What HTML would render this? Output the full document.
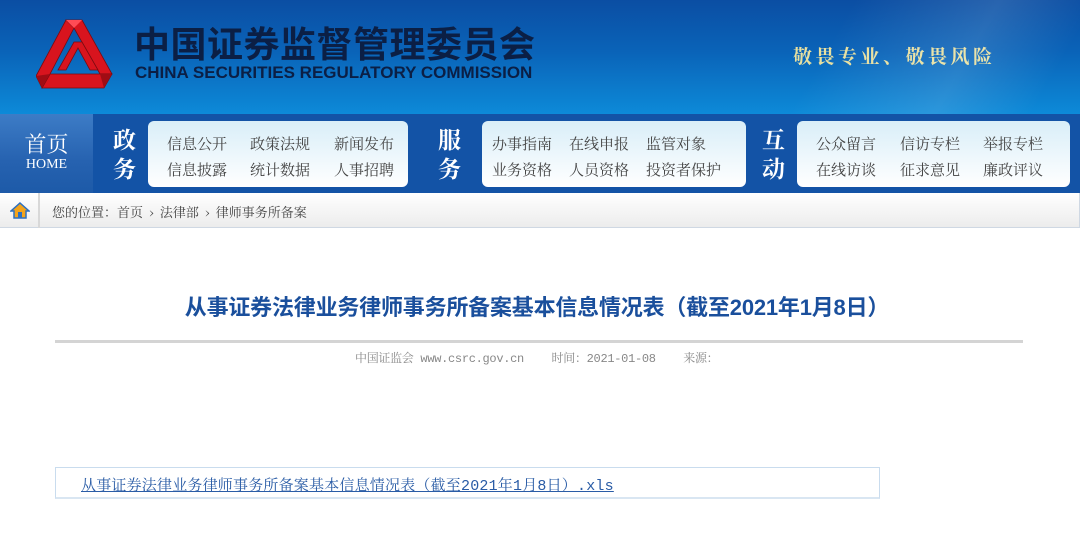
<!DOCTYPE html>
<html><head><meta charset="utf-8">
<style>
*{margin:0;padding:0;box-sizing:border-box}
body{width:1080px;height:539px;overflow:hidden;background:#fff;font-family:"Liberation Serif","Noto Serif CJK SC",serif;position:relative}
.hdr{position:absolute;left:0;top:0;width:1080px;height:114px;background:linear-gradient(180deg,#0b4ea3 0%,#0a63b8 45%,#0d8ad8 100%)}
.hdr:after{content:"";position:absolute;right:0;top:0;width:420px;height:114px;background:linear-gradient(120deg,rgba(255,255,255,0) 40%,rgba(255,255,255,.12) 70%,rgba(255,255,255,0) 90%)}
.t1{position:absolute;left:134px;top:22px;font:bold 36px/40px "Noto Sans CJK SC",sans-serif;color:#0b1f45;letter-spacing:0.5px;white-space:nowrap}
.t2{position:absolute;left:135px;top:64px;font:bold 17px/18px "Liberation Sans",sans-serif;color:#0b1f45;white-space:nowrap;transform:scaleX(1.0);transform-origin:left}
.slog{position:absolute;left:793px;top:42px;font:bold 19px "Noto Serif CJK SC",serif;color:#e8e0a0;letter-spacing:3.5px;white-space:nowrap}
.nav{position:absolute;left:0;top:114px;width:1080px;height:79px;background:#1353a6}
.home{position:absolute;left:0;top:0;width:93px;height:79px;background:linear-gradient(180deg,#3d7cc6,#2662b0 60%,#1d5aa8);color:#fff;text-align:center}
.home b{display:block;font:22px/26px "Noto Serif CJK SC",serif;margin-top:17px}
.home span{display:block;font:14px "Liberation Serif",serif;margin-top:0}
.vt{position:absolute;top:10px;color:#fff;font:bold 23px/29px "Noto Serif CJK SC",serif;width:26px}
.box{position:absolute;top:7px;height:66px;border-radius:6px;background:linear-gradient(180deg,#d9eef8,#fff);}
.box a{position:absolute;font:15px "Noto Serif CJK SC",serif;color:#444;white-space:nowrap;text-decoration:none}
.bc{position:absolute;left:0;top:193px;width:1080px;height:35px;background:linear-gradient(180deg,#fff,#ececec);border-bottom:1px solid #cfd8e3;border-right:1px solid #cfd8e3}
.bc .sep{position:absolute;left:38px;top:0;width:2px;height:35px;background:#d8d8d8}
.bc .tx{position:absolute;left:52px;top:9px;font:13px "Noto Serif CJK SC",serif;color:#444;white-space:nowrap;word-spacing:3px}
.title{position:absolute;left:0;width:1080px;top:290px;text-align:center;font:bold 22px "Liberation Sans","Noto Sans CJK SC",sans-serif;color:#1a4f9c;padding-right:6px;letter-spacing:-0.2px}
.line{position:absolute;left:55px;top:340px;width:968px;height:3px;background:#d4d4d4}
.meta{position:absolute;left:355px;top:349px;font:12px "Liberation Mono","Noto Serif CJK SC",monospace;color:#888;white-space:pre;letter-spacing:-0.3px}
.meta i{font-style:normal;font-family:"Noto Serif CJK SC",serif}
.att{position:absolute;left:55px;top:467px;width:825px;height:32px;border:1px solid #c9dcee;border-bottom:2px solid #d9e6f2}
.att a{position:absolute;left:25px;top:6px;font:15px "Liberation Mono","Noto Serif CJK SC",monospace;color:#2a5ca6;text-decoration:underline;white-space:nowrap;letter-spacing:0.2px}
</style></head><body>
<div class="hdr">
<svg style="position:absolute;left:36px;top:16px" width="80" height="74" viewBox="0 0 80 74">
<g fill="#d8141e" stroke="#7a0a10" stroke-width="0.8">
<polygon points="30,4 46,4 76,58 64,58 38,12"/>
<polygon points="76,58 68,72 6,72 14,58"/>
<polygon points="6,72 0,60 30,4 38,12 14,58"/>
<polygon points="38,26 46,26 62,54 54,54 42,32 30,54 22,54"/>
</g>
<polygon points="38,12 30,4 46,4" fill="#ff4b55"/>
<polygon points="14,58 6,72 0,60" fill="#a00c14"/>
<polygon points="64,58 76,58 68,72" fill="#a00c14"/>
</svg>
<div class="t1">中国证券监督管理委员会</div>
<div class="t2">CHINA SECURITIES REGULATORY COMMISSION</div>
<div class="slog">敬畏专业、敬畏风险</div>
</div>
<div class="nav">
<div class="home"><b>首页</b><span>HOME</span></div>
<div class="vt" style="left:113px">政<br>务</div>
<div class="box" style="left:148px;width:260px">
<a style="left:19px;top:12px">信息公开</a><a style="left:102px;top:12px">政策法规</a><a style="left:186px;top:12px">新闻发布</a>
<a style="left:19px;top:38px">信息披露</a><a style="left:102px;top:38px">统计数据</a><a style="left:186px;top:38px">人事招聘</a></div>
<div class="vt" style="left:438px">服<br>务</div>
<div class="box" style="left:482px;width:264px">
<a style="left:10px;top:12px">办事指南</a><a style="left:87px;top:12px">在线申报</a><a style="left:164px;top:12px">监管对象</a>
<a style="left:10px;top:38px">业务资格</a><a style="left:87px;top:38px">人员资格</a><a style="left:164px;top:38px">投资者保护</a></div>
<div class="vt" style="left:762px">互<br>动</div>
<div class="box" style="left:797px;width:273px">
<a style="left:19px;top:12px">公众留言</a><a style="left:103px;top:12px">信访专栏</a><a style="left:186px;top:12px">举报专栏</a>
<a style="left:19px;top:38px">在线访谈</a><a style="left:103px;top:38px">征求意见</a><a style="left:186px;top:38px">廉政评议</a></div>
</div>
<div class="bc">
<svg style="position:absolute;left:10px;top:9px" width="20" height="17" viewBox="0 0 20 17"><polygon points="10,1 19,9 16,9 16,16 4,16 4,9 1,9" fill="#f2a31b" stroke="#2b6fc0" stroke-width="1.5"/><rect x="8" y="10" width="4" height="6" fill="#2b6fc0"/></svg>
<div class="sep"></div>
<div class="tx">您的位置：首页 › 法律部 › 律师事务所备案</div>
</div>
<div class="title">从事证券法律业务律师事务所备案基本信息情况表（截至2021年1月8日）</div>
<div class="line"></div>
<div class="meta"><i>中国证监会</i> www.csrc.gov.cn    <i>时间：</i>2021-01-08    <i>来源：</i></div>
<div class="att"><a>从事证券法律业务律师事务所备案基本信息情况表（截至2021年1月8日）.xls</a></div>
</body></html>
